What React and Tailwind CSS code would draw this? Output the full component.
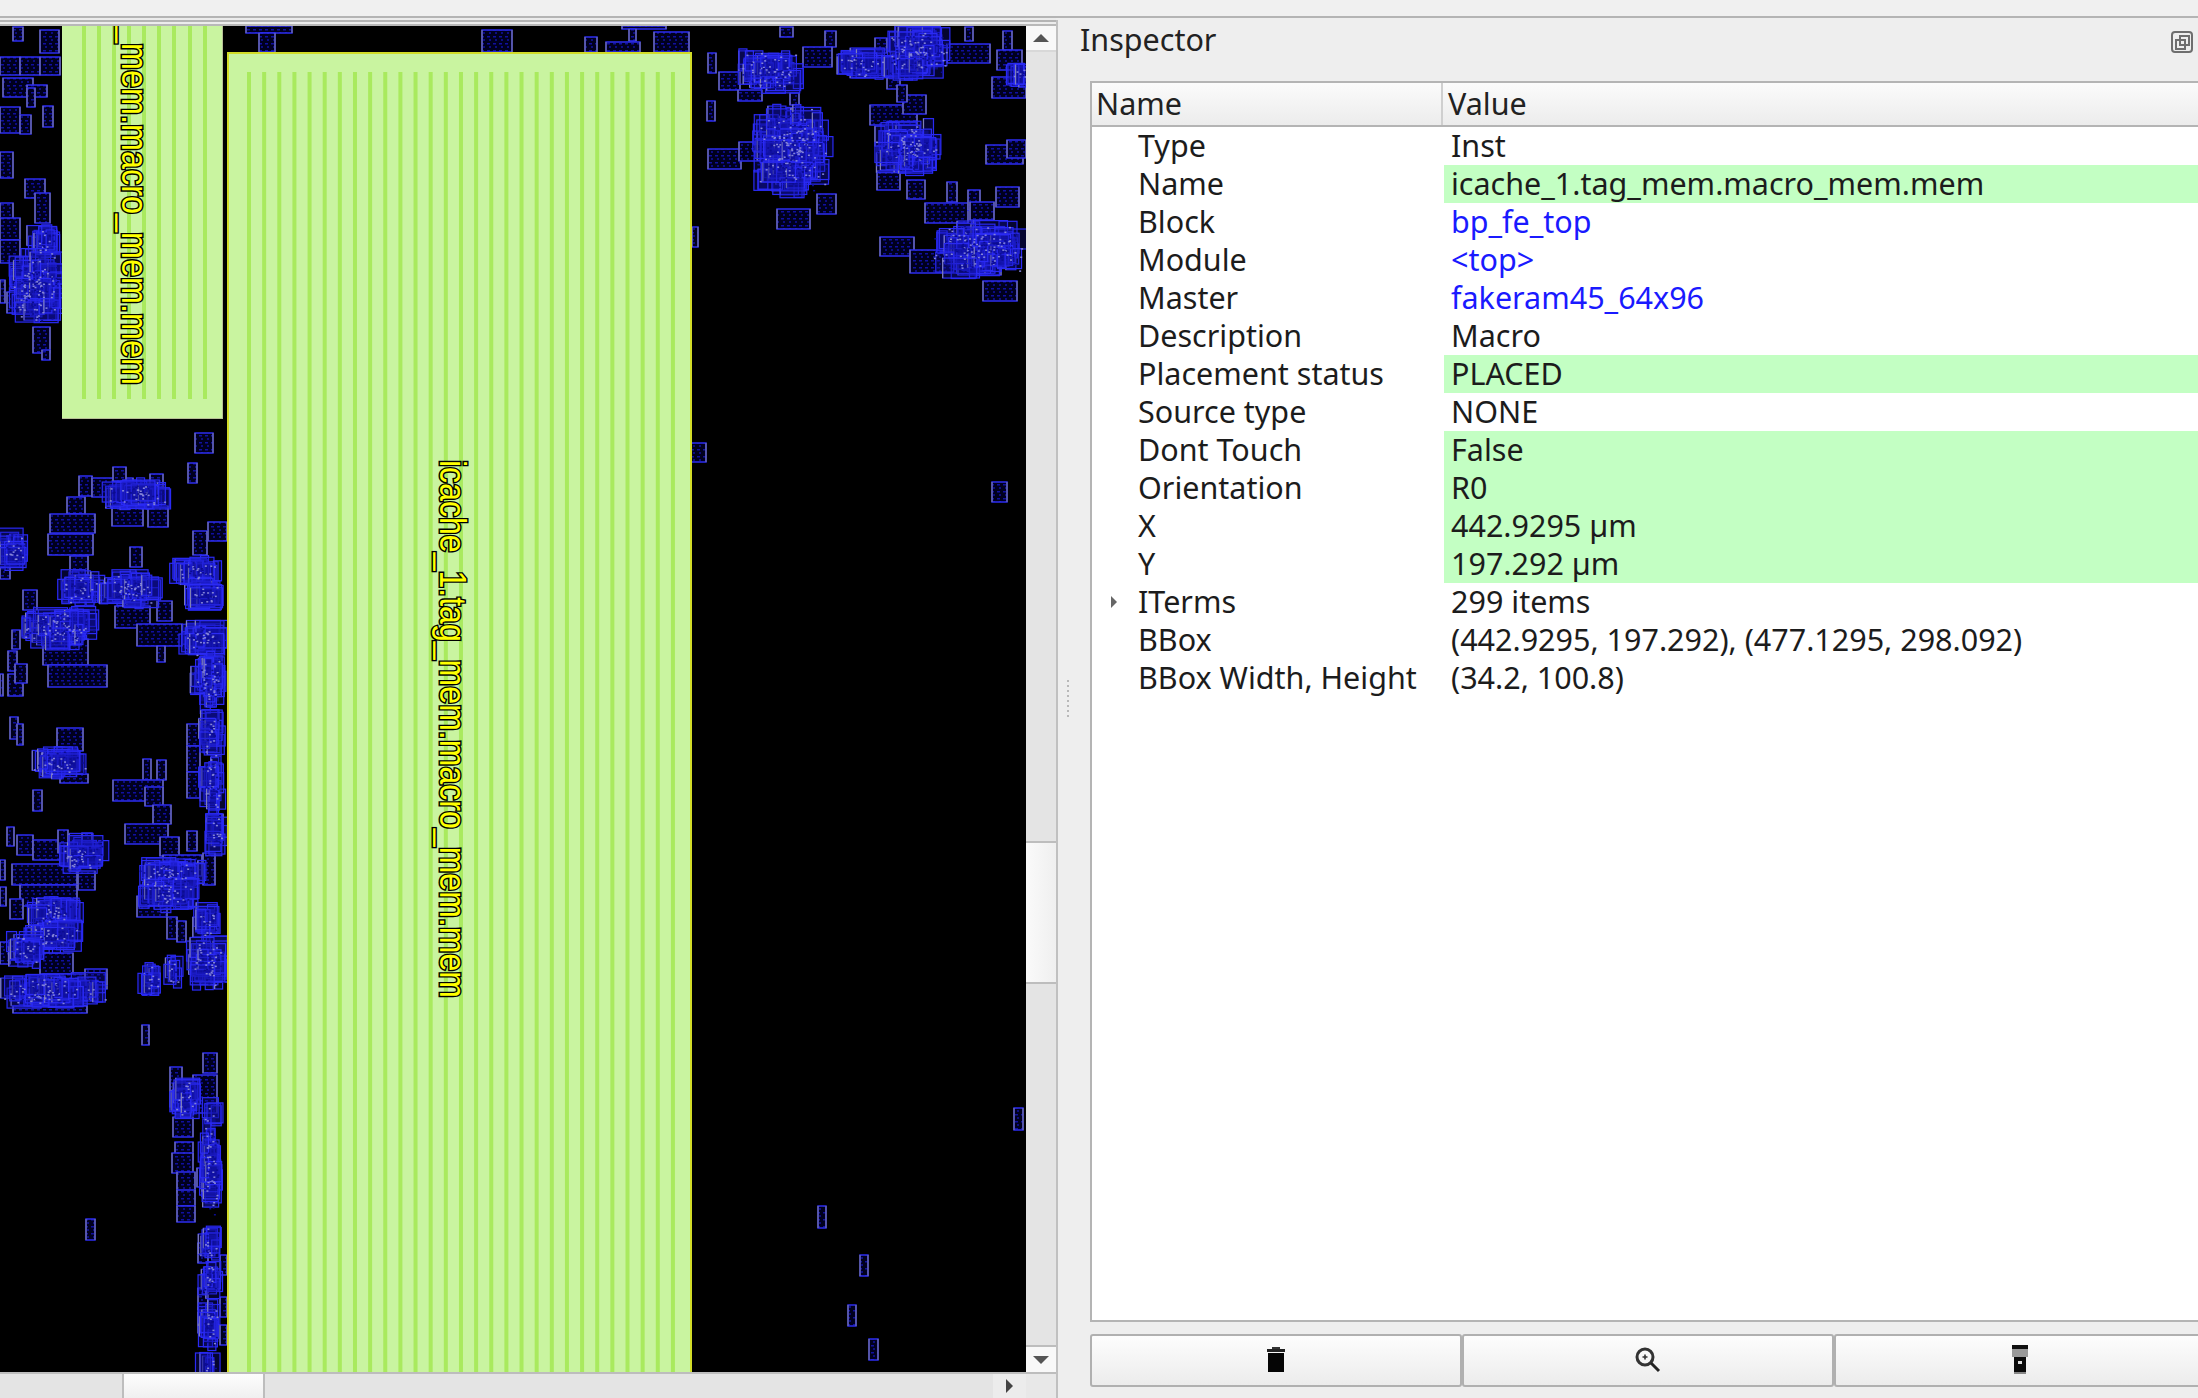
import React from 'react';

// cells: x, y, w, h in page pixels
const cells = [
  [708,53,8,20],[719,72,21,18],[738,90,24,11],[790,93,9,12],[707,101,8,20],[825,31,11,16],[803,47,29,20],[875,38,12,15],
  [887,78,13,11],[947,44,43,19],[965,27,8,14],[1003,31,9,19],[997,50,25,20],[992,77,34,21],[780,27,13,10],[708,149,33,20],
  [739,142,37,19],[817,194,19,20],[777,209,33,20],[870,105,47,20],[903,95,23,19],[897,85,10,17],[877,171,23,19],[907,180,18,19],
  [947,182,10,20],[925,203,43,20],[968,190,12,20],[970,202,24,18],[996,187,23,20],[986,145,37,19],[1007,140,19,18],[880,237,34,19],
  [910,250,47,23],[958,253,43,22],[983,281,34,20],[692,227,6,20],[691,443,15,19],[992,482,15,20],[1014,1108,9,22],[818,1206,8,22],
  [860,1255,8,21],[848,1305,8,21],[869,1339,9,21],[482,30,30,22],[585,37,12,15],[606,42,34,10],[654,32,35,20],[246,26,46,7],
  [259,33,16,19],[622,26,44,3],[629,29,7,12],[195,433,18,20],
  [0,57,20,18],[20,57,20,18],[40,57,20,18],[13,27,10,14],[40,30,19,23],[3,78,30,19],[27,85,20,12],[27,88,8,19],[43,106,10,21],
  [0,107,20,26],[20,115,11,19],[0,152,13,26],[25,179,20,19],[35,193,15,30],[0,203,13,24],[0,218,20,22],[0,240,20,23],[0,280,5,23],[7,292,13,21],
  [33,327,17,26],[42,350,8,10],
  [188,463,9,20],[79,476,13,20],[92,478,41,19],[113,467,13,14],[150,474,13,15],[112,506,31,20],[148,506,20,21],[67,497,18,17],
  [50,514,45,19],[48,534,45,21],[70,556,18,19],[130,547,12,20],[0,567,10,12],[23,590,14,20],[115,606,35,22],[157,601,15,20],
  [137,624,45,22],[157,646,8,16],[43,639,45,26],[48,665,59,22],[12,630,8,19],[8,651,9,20],[8,674,15,22],[15,664,12,19],[0,674,3,22],
  [10,717,8,22],[17,724,6,21],[57,728,26,23],[60,774,28,9],[33,790,9,21],[143,759,8,21],[157,760,9,20],[113,780,50,21],[145,787,18,19],
  [153,805,18,19],[125,824,43,20],[160,837,19,19],[163,855,39,21],[137,896,30,21],[167,917,10,22],[177,921,9,21],[187,831,10,20],
  [7,827,7,19],[17,835,16,20],[33,840,27,20],[58,830,10,23],[82,833,10,16],[78,871,17,19],[12,864,65,21],[0,860,5,20],[20,885,57,21],
  [0,887,6,19],[10,899,13,20],[0,942,10,22],[40,953,33,21],[43,974,64,15],[85,969,22,16],[13,1006,74,7],
  [208,522,19,19],[193,531,14,24],[187,724,13,22],[187,746,13,26],[187,772,13,26],[207,814,16,20],[203,853,12,32],
  [142,1025,7,20],[203,1053,14,20],[170,1067,12,40],[193,1075,24,38],[173,1117,20,20],[175,1142,18,18],[172,1153,21,20],[177,1172,18,21],
  [177,1190,18,16],[177,1206,18,16],[197,1168,8,19],[86,1219,9,21],[198,1243,10,20],[220,1255,7,20],[198,1288,10,22],[220,1297,7,20],
  [198,1312,10,21],[220,1325,7,20],
];

// dense areas get filled with random cells
const dense = [
  [738,52,60,38],[833,53,53,24],[887,27,60,50],[755,105,73,90],[875,123,63,50],[933,223,93,50],[1010,63,16,23],
  [32,227,23,28],[13,247,49,80],[0,533,27,34],[60,574,40,29],[100,574,60,31],[20,610,75,36],[30,751,62,23],[103,483,69,23],
  [132,862,70,23],[143,880,52,28],[60,839,45,30],[30,899,50,25],[28,924,52,25],[10,935,33,29],[0,978,110,28],[143,965,16,30],
  [167,958,12,28],[173,560,44,21],[188,583,32,25],[182,624,45,29],[195,653,28,57],[203,710,17,46],[203,753,17,64],[207,814,16,39],
  [197,903,21,36],[190,939,37,50],[173,1080,24,37],[202,1100,16,127],[203,1227,14,33],[203,1263,14,34],[203,1297,14,50],[200,1358,17,14],
];

function makeDense() {
  let seed = 7;
  const rnd = () => {
    seed = (seed * 16807) % 2147483647;
    return seed / 2147483647;
  };
  const boxes = [];
  const specks = [];
  dense.forEach(([x, y, w, h]) => {
    const n = Math.max(6, Math.round((w * h) / 45));
    for (let i = 0; i < n; i++) {
      const cw = Math.min(w, [8, 10, 18, 24, 34][Math.floor(rnd() * 5)]);
      const ch = 20;
      // bunch toward the middle so the edge of a cluster stays ragged
      const px = (rnd() + rnd()) / 2;
      const py = (rnd() + rnd()) / 2;
      boxes.push([x - 6 + px * (w - cw + 12), y - 6 + py * (h - ch + 12), cw, ch]);
    }
    const m = Math.round((w * h) / 30);
    for (let i = 0; i < m; i++) {
      specks.push([x + w * (rnd() + rnd()) / 2, y + h * (rnd() + rnd()) / 2]);
    }
  });
  return { boxes, specks };
}

const { boxes, specks } = makeDense();

const smallStripes = [82, 97, 112, 127, 142, 157, 172, 188, 203];
const bigStripes = Array.from({ length: 29 }, (_, i) => 247 + i * 15.14);

function ChipCanvas() {
  return (
    <svg viewBox="0 26 1026 1346" className="block w-full h-full bg-black">
      <defs>
        <pattern id="pins" width="6" height="7" patternUnits="userSpaceOnUse">
          <rect x="1" y="1" width="3" height="1.5" fill="#1010a0" />
          <rect x="3" y="4" width="2" height="2" fill="#0c0c80" />
        </pattern>
        <clipPath id="beside-macros">
          <path d="M0 26H62V419H227V1372H0ZM692 26H1026V1372H692ZM227 26H692V52H227Z" />
        </clipPath>
      </defs>

      <g className="blur-[0.5px]">
        <rect x="62" y="20" width="161" height="399" fill="#b8c098" />
        <rect x="62" y="20" width="160" height="398" fill="#c9f4a0" />
        {smallStripes.map((x) => (
          <rect key={x} x={x} y="20" width="4" height="379" fill="#a9ea5e" />
        ))}

        <rect x="227" y="52" width="465" height="1330" fill="#d2dc28" />
        <rect x="229" y="54" width="461" height="1330" fill="#c9f4a0" />
        {bigStripes.map((x) => (
          <rect key={x} x={x} y="72" width="4" height="1310" fill="#a9ea5e" />
        ))}

        <g clipPath="url(#beside-macros)">
          {cells.map(([x, y, w, h], i) => (
            <g key={i}>
              <rect x={x} y={y} width={w} height={h} fill="#00001e" />
              <rect x={x} y={y} width={w} height={h} fill="url(#pins)" stroke="#2c2cf0" strokeWidth="1.5" />
              <path d={`M${x} ${y}V${y + h}M${x + w} ${y}V${y + h}`} stroke="#77779f" strokeWidth="1.2" />
            </g>
          ))}
          {dense.map(([x, y, w, h], i) => (
            <rect key={i} x={x + w * 0.15} y={y + h * 0.15} width={w * 0.7} height={h * 0.7} fill="#2020dc" opacity="0.4" />
          ))}
          {boxes.map(([x, y, w, h], i) => (
            <g key={i}>
              <rect x={x} y={y} width={w} height={h} fill="#1010a0" opacity="0.3" />
              <rect x={x} y={y} width={w} height={h} fill="none" stroke="#2a2af4" strokeWidth="1.2" />
              {i % 4 === 0 && <path d={`M${x} ${y}V${y + h}`} stroke="#8080b4" strokeWidth="1.2" />}
            </g>
          ))}
          {specks.map(([x, y], i) => (
            <rect key={i} x={x} y={y} width="2" height="1.5" fill={i % 2 === 0 ? '#8484d8' : '#0c0c90'} />
          ))}
        </g>
      </g>

      <text transform="translate(122 385) rotate(90)" textAnchor="end" textLength="360" lengthAdjust="spacingAndGlyphs" fontFamily="Liberation Sans, sans-serif" fontSize="36" fill="#ffff00" stroke="#000" strokeWidth="3" paintOrder="stroke">_mem.macro_mem.mem</text>
      <text transform="translate(440 460) rotate(90)" textLength="538" lengthAdjust="spacingAndGlyphs" fontFamily="Liberation Sans, sans-serif" fontSize="36" fill="#ffff00" stroke="#000" strokeWidth="3" paintOrder="stroke">icache_1.tag_mem.macro_mem.mem</text>
    </svg>
  );
}

function Scrollbars({ children }) {
  return (
    <div className="flex-1 min-h-0 flex flex-col">
      <div className="flex-1 min-h-0 flex">
        <div className="w-[1026px] min-w-0">{children}</div>
        <div className="flex-1 flex flex-col bg-[#e4e4e4]">
          <div className="h-[26px] flex items-center justify-center bg-[#f8f8f8] border-b-2 border-[#d8d8d8]">
            <div className="w-0 h-0 border-x-[8px] border-x-transparent border-b-[8px] border-b-[#555]" />
          </div>
          <div className="h-[789px]" />
          <div className="h-[143px] bg-gradient-to-r from-[#fafafa] to-[#efefef] border-y-2 border-[#bdbdbd]" />
          <div className="flex-1" />
          <div className="h-[27px] flex items-center justify-center bg-[#f8f8f8] border-t-2 border-[#bdbdbd]">
            <div className="w-0 h-0 border-x-[8px] border-x-transparent border-t-[8px] border-t-[#555]" />
          </div>
        </div>
      </div>
      <div className="h-[26px] flex bg-[#e4e4e4] border-t-2 border-[#bdbdbd]">
        <div className="w-[122px]" />
        <div className="w-[143px] bg-gradient-to-b from-[#fdfdfd] to-[#f0f0f0] border-x-2 border-[#bdbdbd]" />
        <div className="w-[728px]" />
        <div className="w-[33px] flex items-center justify-center bg-[#ececec]">
          <div className="w-0 h-0 border-y-[7px] border-y-transparent border-l-[7px] border-l-[#444]" />
        </div>
        <div className="flex-1 bg-[#e8e8e8]" />
      </div>
    </div>
  );
}

const rows = [
  { name: 'Type', value: 'Inst' },
  { name: 'Name', value: 'icache_1.tag_mem.macro_mem.mem', edit: true },
  { name: 'Block', value: 'bp_fe_top', link: true },
  { name: 'Module', value: '<top>', link: true },
  { name: 'Master', value: 'fakeram45_64x96', link: true },
  { name: 'Description', value: 'Macro' },
  { name: 'Placement status', value: 'PLACED', edit: true },
  { name: 'Source type', value: 'NONE' },
  { name: 'Dont Touch', value: 'False', edit: true },
  { name: 'Orientation', value: 'R0', edit: true },
  { name: 'X', value: '442.9295 µm', edit: true },
  { name: 'Y', value: '197.292 µm', edit: true },
  { name: 'ITerms', value: '299 items', expand: true },
  { name: 'BBox', value: '(442.9295, 197.292), (477.1295, 298.092)' },
  { name: 'BBox Width, Height', value: '(34.2, 100.8)' },
];

function TrashIcon() {
  return (
    <svg width="20" height="26" viewBox="0 0 20 26">
      <rect x="6" y="0" width="8" height="2" fill="#333" />
      <rect x="1" y="2" width="18" height="3" fill="#222" />
      <rect x="2" y="6" width="16" height="19" fill="#050505" />
    </svg>
  );
}

function ZoomIcon() {
  return (
    <svg width="26" height="26" viewBox="0 0 26 26" fill="none">
      <circle cx="10" cy="10" r="8" stroke="#333" strokeWidth="3" />
      <path d="M10 7.5v5M7.5 10h5" stroke="#333" strokeWidth="1.6" />
      <path d="M16 16l8 8" stroke="#222" strokeWidth="3" />
    </svg>
  );
}

function LightIcon() {
  return (
    <svg width="18" height="29" viewBox="0 0 18 29">
      <rect x="1" y="0" width="16" height="4" fill="#111" />
      <rect x="1" y="4" width="16" height="8" fill="#999" />
      <rect x="3" y="12" width="12" height="16" fill="#0a0a0a" />
      <rect x="7" y="16" width="4" height="3" fill="#ddd" />
      <rect x="3" y="27" width="12" height="2" fill="#888" />
    </svg>
  );
}

function Inspector() {
  return (
    <div className="flex-1 min-w-0 overflow-hidden flex flex-col">
      <div className="h-[63px] shrink-0 flex pt-[3px] pr-[5px] justify-between items-start">
        <span className="text-[30.5px] leading-[36px] pl-[2px] text-[#222]">Inspector</span>
        <svg width="22" height="22" viewBox="0 0 22 22" fill="none" className="mt-[10px]" stroke="#6e6e6e" strokeWidth="2">
          <rect x="1" y="1" width="20" height="20" rx="3" />
          <rect x="9" y="5" width="9" height="9" />
          <rect x="5" y="9" width="9" height="9" />
        </svg>
      </div>

      <div className="flex-1 min-h-0 ml-[12px] flex flex-col bg-white border-l-2 border-b-2 border-[#b4b4b4]">
        <div className="h-[46px] shrink-0 flex bg-gradient-to-b from-[#fbfbfb] to-[#ececec] border-y-2 border-[#b4b4b4] text-[#222] text-[30.5px] leading-[41px]">
          <div className="w-[351px] pl-[4px] border-r-2 border-[#cfcfcf]">Name</div>
          <div className="flex-1 pl-[5px]">Value</div>
        </div>
        {rows.map((r) => (
          <div key={r.name} className="h-[38px] shrink-0 flex text-[30.5px] leading-[37px] text-[#1c1c1c]">
            <div className="w-[352px] shrink-0 pl-[46px] relative">
              {r.expand && (
                <div className="absolute left-[19px] top-[13px] w-0 h-0 border-y-[6px] border-y-transparent border-l-[6px] border-l-[#666]" />
              )}
              {r.name}
            </div>
            <div className={r.edit ? 'flex-1 pl-[7px] bg-[#c3ffc3]' : r.link ? 'flex-1 pl-[7px] text-[#1a1aff]' : 'flex-1 pl-[7px]'}>
              {r.value}
            </div>
          </div>
        ))}
      </div>

      <div className="h-[53px] shrink-0 mt-[12px] mb-[11px] ml-[12px] flex">
        {[<TrashIcon key="t" />, <ZoomIcon key="z" />, <LightIcon key="l" />].map((icon, i) => (
          <div key={i} className="w-[372px] shrink-0 flex items-center justify-center pb-[2px] bg-gradient-to-b from-[#fdfdfd] to-[#ececec] border-2 border-[#b0b0b0] rounded-[3px]">
            {icon}
          </div>
        ))}
      </div>
    </div>
  );
}

export default function App() {
  return (
    <div className="w-[2198px] h-[1398px] overflow-hidden flex flex-col bg-[#eeeeee] font-['Noto_Sans',sans-serif]">
      <div className="h-4 shrink-0 bg-[#f0f0f0]" />
      <div className="flex-1 min-h-0 flex border-t-2 border-[#b4b4b4]">
        <div className="w-[1056px] shrink-0 flex flex-col">
          <div className="h-0.5 shrink-0 bg-[#ececec]" />
          <div className="h-0.5 shrink-0 bg-[#b4b4b4]" />
          <div className="h-0.5 shrink-0 bg-[#ececec]" />
          <div className="h-0.5 shrink-0 bg-[#b8b8b8]" />
          <Scrollbars>
            <ChipCanvas />
          </Scrollbars>
        </div>
        <div className="w-[22px] shrink-0 mt-0.5 border-l-2 border-[#c0c0c0] flex flex-col items-center justify-center gap-[3px] pb-[22px]">
          {[0, 1, 2, 3, 4, 5, 6, 7].map((d) => (
            <div key={d} className="w-[2px] h-[2px] bg-[#b8b8b8]" />
          ))}
        </div>
        <Inspector />
      </div>
    </div>
  );
}
